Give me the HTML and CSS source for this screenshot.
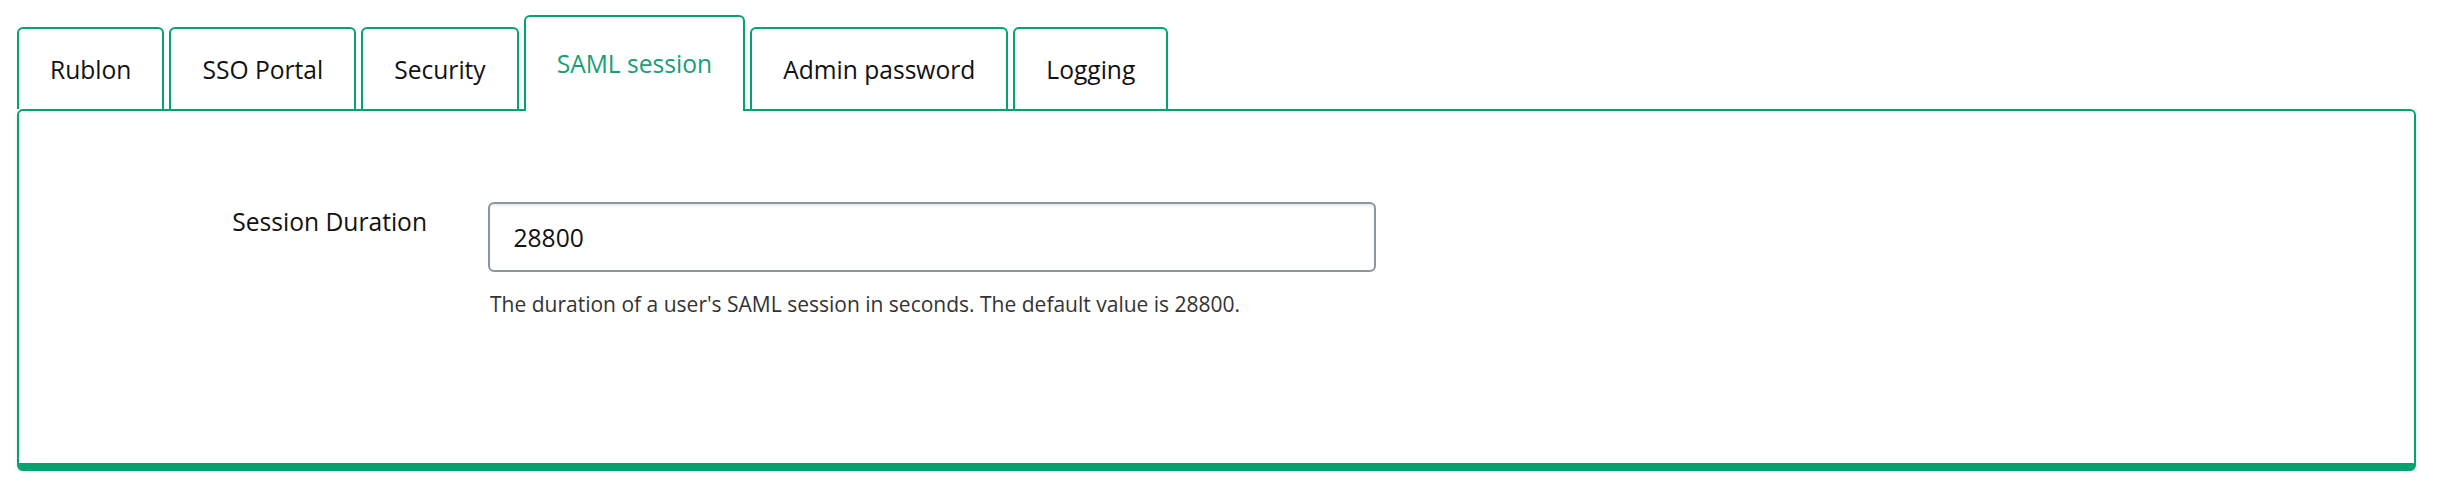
FILE: index.html
```html
<!DOCTYPE html>
<html lang="en">
<head>
<meta charset="utf-8">
<title>Settings</title>
<link rel="stylesheet" href="styles.css">
</head>
<body>
<div class="settings">
  <ul class="tabs">
    <li class="tab">Rublon</li>
    <li class="tab">SSO Portal</li>
    <li class="tab">Security</li>
    <li class="tab tab--active">SAML session</li>
    <li class="tab">Admin password</li>
    <li class="tab">Logging</li>
  </ul>
  <div class="panel">
    <div class="form-row">
      <label class="form-label" for="duration">Session Duration</label>
      <div class="form-field">
        <input class="form-input" id="duration" type="text" value="28800">
        <p class="form-help">The duration of a user's SAML session in seconds. The default value is 28800.</p>
      </div>
    </div>
  </div>
</div>
</body>
</html>
```

FILE: styles.css
```css
html, body {
  margin: 0;
  background: #ffffff;
}

body {
  font-family: "Open Sans", "Noto Sans", sans-serif;
  color: #111111;
}

.settings {
  padding: 15px 23px 0 17px;
}

.tabs {
  display: flex;
  align-items: flex-end;
  gap: 5px;
  list-style: none;
  margin: 0;
  padding: 0;
  position: relative;
  z-index: 1;
}

.tab {
  box-sizing: border-box;
  height: 82px;
  padding: 23.5px 31px 0;
  border: 2px solid #02a271;
  border-bottom: 0;
  border-radius: 6px 6px 0 0;
  background: #ffffff;
  font-size: 24.6px;
  line-height: 34px;
  color: #111111;
  white-space: nowrap;
}

.tab--active {
  height: 96px;
  padding-top: 29.7px;
  margin-bottom: -2px;
  color: #17a077;
}

.panel {
  box-sizing: border-box;
  height: 362px;
  padding-top: 91px;
  border: 2px solid #02a271;
  border-bottom-width: 8px;
  border-radius: 6px;
  background: #ffffff;
  box-shadow: 0 2px 3px rgba(0, 0, 0, 0.12);
}

.form-row {
  display: grid;
  grid-template-columns: 408px 888px;
  column-gap: 61px;
  align-items: start;
}

.form-label {
  display: block;
  padding-top: 3px;
  text-align: right;
  font-size: 24.6px;
  line-height: 34px;
  color: #111111;
}

.form-input {
  display: block;
  box-sizing: border-box;
  width: 100%;
  height: 70px;
  margin: 0;
  padding: 0 23.5px;
  border: 2px solid #8c969e;
  border-radius: 6px;
  background: #ffffff;
  box-shadow: inset 0 2px 2px rgba(0, 0, 0, 0.08);
  font-family: "Open Sans", "Noto Sans", sans-serif;
  font-size: 24.6px;
  color: #111111;
  outline: none;
}

.form-help {
  margin: 17px 0 0 2px;
  font-size: 21px;
  line-height: 30px;
  color: #333333;
}
```
